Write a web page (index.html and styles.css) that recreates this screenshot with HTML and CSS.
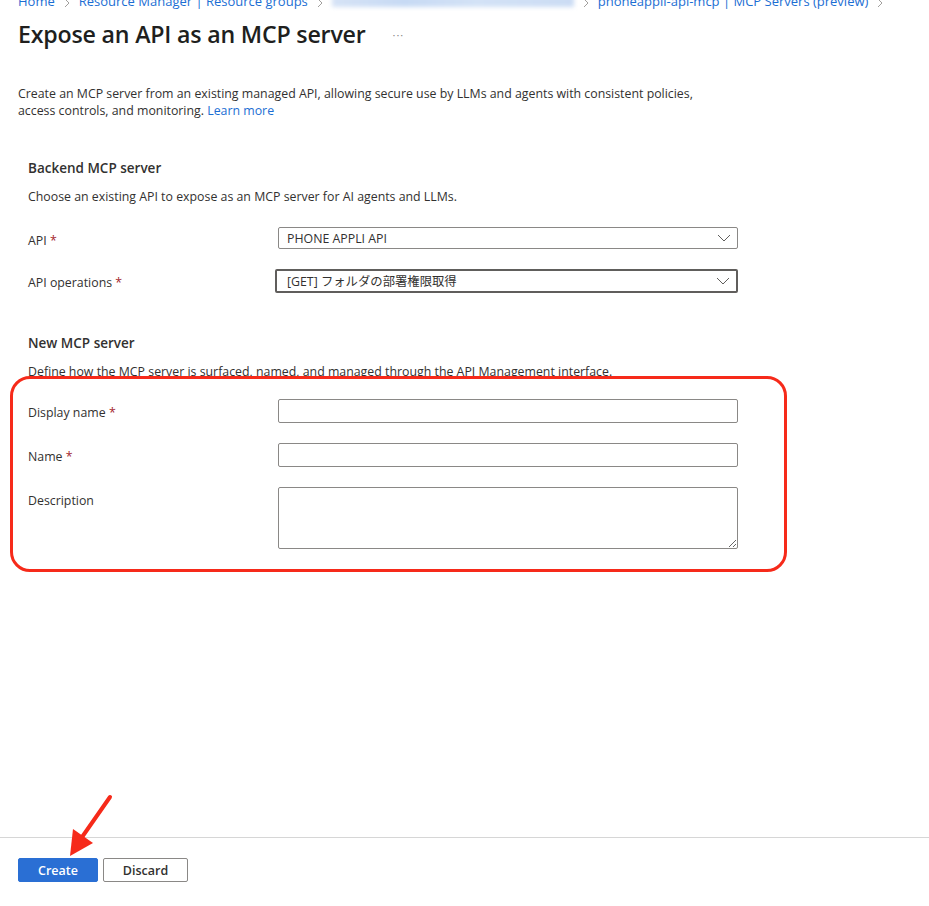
FILE: index.html
```html
<!DOCTYPE html>
<html lang="en">
<head>
<meta charset="utf-8">
<title>Expose an API as an MCP server</title>
<link rel="stylesheet" href="styles.css">
</head>
<body>
<div class="page">
  <div class="main">
    <nav class="crumbs">
      <a class="crumb">Home</a>
      <svg class="sep" viewBox="0 0 6 10" width="6" height="10"><path d="M1 1l4 4-4 4" fill="none" stroke="#a19f9d" stroke-width="1"/></svg>
      <a class="crumb">Resource Manager | Resource groups</a>
      <svg class="sep" viewBox="0 0 6 10" width="6" height="10"><path d="M1 1l4 4-4 4" fill="none" stroke="#a19f9d" stroke-width="1"/></svg>
      <span class="blurred"></span>
      <svg class="sep" viewBox="0 0 6 10" width="6" height="10"><path d="M1 1l4 4-4 4" fill="none" stroke="#a19f9d" stroke-width="1"/></svg>
      <a class="crumb">phoneappli-api-mcp | MCP Servers (preview)</a>
      <svg class="sep" viewBox="0 0 6 10" width="6" height="10"><path d="M1 1l4 4-4 4" fill="none" stroke="#a19f9d" stroke-width="1"/></svg>
    </nav>

    <div class="title-row">
      <h1 class="title">Expose an API as an MCP server</h1>
      <span class="more">···</span>
    </div>

    <p class="intro">Create an MCP server from an existing managed API, allowing secure use by LLMs and agents with consistent policies,<br>access controls, and monitoring. <a class="link">Learn more</a></p>

    <section class="form">
      <h2 class="section-title first">Backend MCP server</h2>
      <p class="section-desc">Choose an existing API to expose as an MCP server for AI agents and LLMs.</p>

      <div class="row row-api">
        <label class="label">API <span class="req">*</span></label>
        <div class="select select-small">
          <span>PHONE APPLI API</span>
          <svg class="chev" viewBox="0 0 14 8" width="14" height="8"><path d="M1 1l6 6 6-6" fill="none" stroke="#605e5c" stroke-width="1"/></svg>
        </div>
      </div>

      <div class="row">
        <label class="label">API operations <span class="req">*</span></label>
        <div class="select select-focus">
          <span>[GET] フォルダの部署権限取得</span>
          <svg class="chev" viewBox="0 0 14 8" width="14" height="8"><path d="M1 1l6 6 6-6" fill="none" stroke="#605e5c" stroke-width="1"/></svg>
        </div>
      </div>

      <h2 class="section-title">New MCP server</h2>
      <p class="section-desc">Define how the MCP server is surfaced, named, and managed through the API Management interface.</p>

      <div class="row row-first">
        <label class="label">Display name <span class="req">*</span></label>
        <input class="field" type="text">
      </div>
      <div class="row">
        <label class="label">Name <span class="req">*</span></label>
        <input class="field" type="text">
      </div>
      <div class="row">
        <label class="label">Description</label>
        <textarea class="field area"></textarea>
      </div>
    </section>
  </div>

  <footer class="footer">
    <button class="btn btn-primary">Create</button>
    <button class="btn btn-default">Discard</button>
  </footer>

  <div class="highlight"></div>
  <svg class="arrow" width="60" height="70" viewBox="0 0 60 70">
    <line x1="50" y1="7" x2="20" y2="50" stroke="#f62a1a" stroke-width="4" stroke-linecap="round"/>
    <polygon points="10,66 13,39 33,53" fill="#f62a1a"/>
  </svg>
</div>
</body>
</html>
```

FILE: styles.css
```css
* { box-sizing: border-box; }

html, body {
  margin: 0;
  padding: 0;
  background: #ffffff;
}

body {
  font-family: "Open Sans", "Noto Sans", "Noto Sans CJK JP", sans-serif;
  font-size: 12.35px;
  color: #323130;
  overflow: hidden;
}

.page {
  position: relative;
  height: 906px;
  display: flex;
  flex-direction: column;
}

.main {
  flex: 1;
  padding-left: 18px;
}

.crumbs {
  margin-top: -9px;
  height: 20px;
  display: flex;
  align-items: center;
  gap: 9px;
  font-size: 13px;
  line-height: 20px;
  white-space: nowrap;
}

.crumb {
  color: #1b6ed3;
}

.sep {
  flex: none;
  margin-top: 4px;
}

.blurred {
  width: 242px;
  height: 16px;
  margin-top: -4px;
  background: linear-gradient(90deg, #d6e3f6, #c7daf4 30%, #d3e2f6 60%, #cbdcf4);
  filter: blur(2px);
}

.title-row {
  margin-top: 7px;
  height: 32px;
  display: flex;
  align-items: center;
}

.title {
  margin: 0;
  font-size: 23.2px;
  font-weight: 600;
  line-height: 32px;
  color: #201f1e;
  letter-spacing: -0.2px;
}

.more {
  margin-left: 27px;
  color: #8a8886;
  font-size: 11px;
  letter-spacing: 1px;
}

.intro {
  margin: 34.5px 0 0;
  line-height: 17px;
}

.link {
  color: #1b6ed3;
}

.form {
  padding-left: 10px;
}

.section-title {
  margin: 40px 0 0;
  font-size: 13.5px;
  font-weight: 600;
  line-height: 20px;
}

.section-title.first {
  margin-top: 39.5px;
}

.section-desc {
  margin: 9.5px 0 0;
  line-height: 17px;
}

.row {
  display: flex;
  align-items: flex-start;
  margin-top: 20px;
}

.row-api {
  margin-top: 22.5px;
}

.row-first {
  margin-top: 19.5px;
}

.label {
  width: 250px;
  flex: none;
  padding-top: 5px;
  line-height: 17px;
}

.req {
  color: #a4262c;
}

.select {
  width: 460px;
  height: 24px;
  border: 1px solid #8a8886;
  border-radius: 2px;
  display: flex;
  align-items: center;
  justify-content: space-between;
  padding: 0 6px 0 8px;
}

.select-small {
  height: 22px;
}

.select-focus {
  width: 463px;
  margin-left: -3px;
  border: 2px solid #605e5c;
  padding-left: 10px;
}

.chev {
  flex: none;
}

.field {
  width: 460px;
  height: 24px;
  border: 1px solid #8a8886;
  border-radius: 2px;
  margin: 0;
  padding: 0 8px;
  font: inherit;
  background: #fff;
}

.area {
  height: 62px;
  resize: vertical;
}

.footer {
  flex: none;
  height: 69px;
  border-top: 1px solid #d6d6d6;
  padding: 20px 0 0 18px;
  display: flex;
  align-items: flex-start;
  gap: 5px;
}

.btn {
  height: 24px;
  border-radius: 2px;
  font-family: inherit;
  font-size: 12.5px;
  font-weight: 600;
  padding: 0;
  cursor: pointer;
}

.btn-primary {
  width: 80px;
  background: #2a6fd4;
  border: 1px solid #2a6fd4;
  color: #ffffff;
}

.btn-default {
  width: 85px;
  background: #ffffff;
  border: 1px solid #8a8886;
  color: #323130;
}

.highlight {
  position: absolute;
  left: 10px;
  top: 376px;
  width: 777px;
  height: 196px;
  border: 3px solid #f62a1a;
  border-radius: 20px;
  pointer-events: none;
}

.arrow {
  position: absolute;
  left: 60px;
  top: 790px;
  pointer-events: none;
}
```
